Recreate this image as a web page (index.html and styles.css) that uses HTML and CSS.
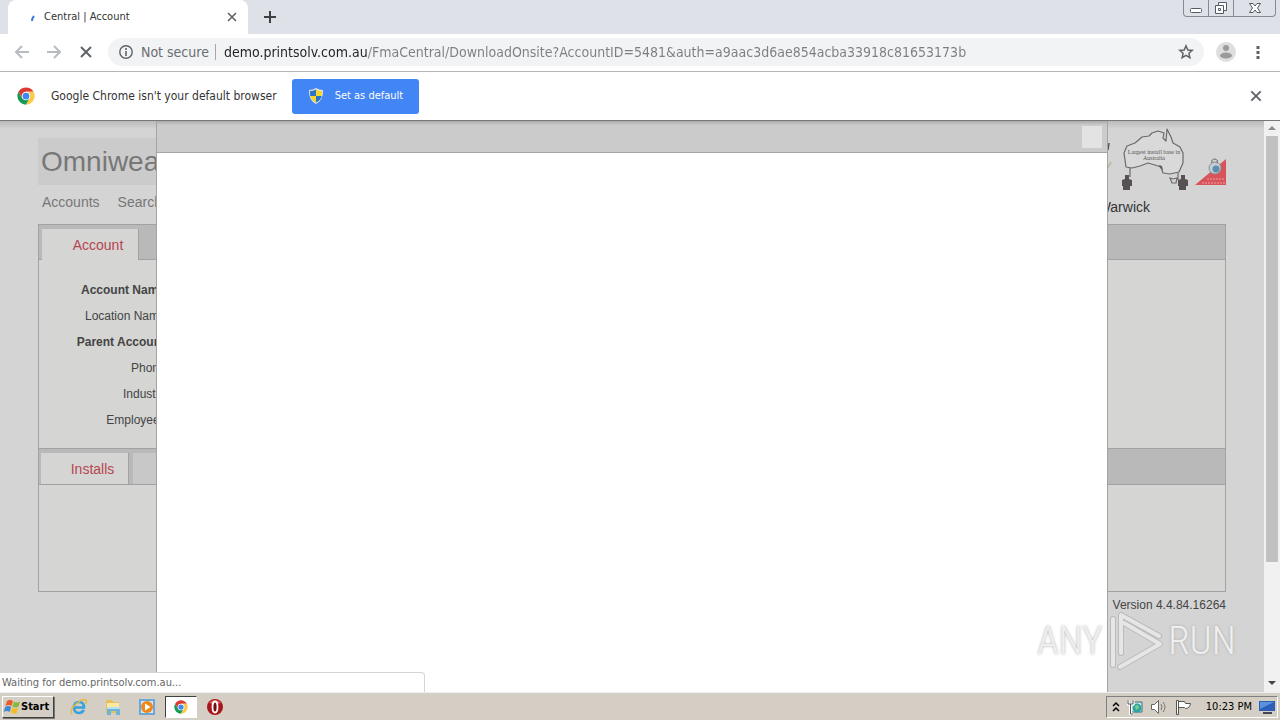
FILE: index.html
```html
<!DOCTYPE html>
<html lang="en">
<head>
<meta charset="utf-8">
<title>Central | Account</title>
<link rel="stylesheet" href="styles.css">
</head>
<body>
<svg class="defs" aria-hidden="true">
  <symbol id="chrome" viewBox="0 0 48 48">
    <circle cx="24" cy="24" r="23" fill="#fff"/>
    <path d="M24 24 4.1 12.5A23 23 0 0 1 43.9 12.5H24z" fill="#db3a30"/>
    <path d="M4.1 12.5A23 23 0 0 0 24 47L34 29.8 24 24 14 29.8z" fill="#179a58"/>
    <path d="M43.9 12.5A23 23 0 0 1 24 47L34 29.8 32 16 24 12.5z" fill="#fbcb43"/>
    <path d="M4.1 12.5 14 29.8 24 12.5z" fill="#db3a30"/>
    <circle cx="24" cy="24" r="11.5" fill="#fff"/>
    <circle cx="24" cy="24" r="9" fill="#4285f4"/>
  </symbol>
  <symbol id="cross" viewBox="0 0 12 12">
    <path d="M2 2 10 10M10 2 2 10" fill="none" stroke="currentColor" stroke-width="1.600"/>
  </symbol>
</svg>

<header class="tabstrip">
  <div class="tab">
    <svg class="spinner" viewBox="0 0 8 10"><path d="M6 2Q4 4 4 7" fill="none" stroke="#3b78d8" stroke-width="2"/></svg>
    <span class="tab-title">Central | Account</span>
    <button class="icon-btn tab-close" aria-label="Close tab"><svg width="12" height="12"><use href="#cross"/></svg></button>
  </div>
  <button class="icon-btn new-tab" aria-label="New tab"><svg width="14" height="14" viewBox="0 0 14 14"><path d="M7 1V13M1 7H13" stroke="#3c4043" stroke-width="2"/></svg></button>
  <div class="window-controls">
    <button class="wc" aria-label="Minimize"><svg width="14" height="16" viewBox="0 0 14 16"><rect x="1.500" y="8.500" width="11" height="4" rx="1" fill="#fff" stroke="#555b66"/></svg></button>
    <button class="wc" aria-label="Restore"><svg width="14" height="16" viewBox="0 0 14 16"><path d="M4.500 2.500h8v8h-8z" fill="#fff" stroke="#555b66"/><path d="M1.500 5.500h8v8h-8zM4.500 8.500h2v2h-2z" fill="#fff" stroke="#555b66"/></svg></button>
    <button class="wc wc-close" aria-label="Close"><svg width="14" height="16" viewBox="0 0 14 16"><path d="M1.500 3.500h3.500l2 2.500 2-2.500h3.500L9.500 8l3 4.500H9L7 10l-2 2.500H1.500L4.500 8z" fill="#fff" stroke="#555b66"/></svg></button>
  </div>
</header>

<nav class="toolbar">
  <button class="icon-btn tool" aria-label="Back"><svg width="16" height="16" viewBox="0 0 16 16"><path d="M15 8H2M8 2 2 8l6 6" fill="none" stroke="#b8bbbf" stroke-width="2"/></svg></button>
  <button class="icon-btn tool" aria-label="Forward"><svg width="16" height="16" viewBox="0 0 16 16"><path d="M1 8h13M8 2l6 6-6 6" fill="none" stroke="#b8bbbf" stroke-width="2"/></svg></button>
  <button class="icon-btn tool" aria-label="Stop"><svg width="16" height="16" viewBox="0 0 16 16"><path d="M3 3 13 13M13 3 3 13" stroke="#5f6368" stroke-width="2"/></svg></button>
  <div class="omnibox">
    <svg width="16" height="16" viewBox="0 0 16 16"><circle cx="8" cy="8" r="6.200" fill="none" stroke="#5f6368" stroke-width="1.400"/><path d="M8 7v5M8 4v2" stroke="#5f6368" stroke-width="1.600"/></svg>
    <label class="secure" for="url">Not secure</label>
    <input class="url" id="url" type="text" spellcheck="false" value="demo.printsolv.com.au/FmaCentral/DownloadOnsite?AccountID=5481&amp;auth=a9aac3d6ae854acba33918c81653173b">
    <button class="icon-btn star" aria-label="Bookmark this page"><svg width="16" height="16" viewBox="0 0 16 16"><path d="M8 1.800 9.800 6l4.400.4-3.300 2.900 1 4.400L8 11.400l-3.900 2.300 1-4.400L1.800 6.400 6.200 6z" fill="none" stroke="#5f6368" stroke-width="1.500"/></svg></button>
  </div>
  <button class="icon-btn profile" aria-label="Profile"><svg width="20" height="20" viewBox="0 0 20 20"><circle cx="10" cy="10" r="10" fill="#dedede"/><circle cx="10" cy="6" r="3" fill="#9a9a9a"/><ellipse cx="10" cy="13.500" rx="6" ry="3" fill="#9a9a9a"/></svg></button>
  <button class="icon-btn menu" aria-label="Menu"><svg width="4" height="14" viewBox="0 0 4 14"><path d="M.5 1h3v3h-3zM.5 6h3v3h-3zM.5 11h3v3h-3z" fill="#5f6368"/></svg></button>
</nav>

<section class="infobar">
  <svg width="18" height="18"><use href="#chrome"/></svg>
  <span class="info-text">Google Chrome isn't your default browser</span>
  <button class="set-default">
    <svg width="16" height="16" viewBox="0 0 16 16"><path d="M8 0Q11 2 15 2 15.500 12 8 16 .5 12 1 2 5 2 8 0z" fill="#dfe5e9"/><path d="M8 1.500V8H2.200L2 3Q5 3 8 1.500z" fill="#2b75c4"/><path d="M8 1.500Q11 3 14 3L13.800 8H8z" fill="#f6d531"/><path d="M2.200 8H8v6.800Q3 12 2.200 8z" fill="#f6d531"/><path d="M8 8h5.800Q13 12 8 14.800z" fill="#2b75c4"/></svg>
    <span>Set as default</span>
  </button>
  <button class="icon-btn info-close" aria-label="Dismiss"><svg width="14" height="14"><use href="#cross"/></svg></button>
</section>

<div class="viewport">
  <main class="page">
    <div class="brand">
      <h1 class="company">Omniwealth</h1>
      <svg class="brand-art" width="124" height="68" viewBox="0 0 124 68">
        <path d="M7 18 6 25" fill="none" stroke="#555" stroke-width="1.500"/><path d="M9 37 5 44" fill="none" stroke="#c0bda3" stroke-width="2"/>
        <path d="M24 42 22 28 25 21 33 18 40 12 47 11 50 8 56 6 62 8 61 13 64 16 65 4 69 12 71 18 78 22 81 28 81 38 77 47 68 49 61 48 59 42 53 40 46 38 38 41 30 43z" fill="#d9d9d9" stroke="#6a6a6a" stroke-width="1.200" stroke-linejoin="round"/>
        <path d="M57 40l3 1 1 4-3-2z" fill="#606060"/>
        <path d="M28 43v9M76 48v7M68 53l3 1 4-1-1 5h-4z" fill="none" stroke="#6a6a6a" stroke-width="1.200"/>
        <path id="person" d="M23 50h4v4l3 1v6h-2v4h-7v-4h-1v-6l3-1z" fill="#565254"/>
        <use href="#person" x="56"/>
        <text x="52" y="29" class="map-text">Largest install base in</text>
        <text x="52" y="35" class="map-text">Australia</text>
        <path d="M93 60 124 34V60z" fill="#d9535b"/>
        <path d="M105 54h18M100 58h23" stroke="#e9a2a4" stroke-width="1" stroke-dasharray="2 1"/>
        <circle cx="113" cy="43" r="6" fill="#c3ccd1" stroke="#8b9298"/><circle cx="114" cy="44" r="3.500" fill="#5b8faf"/><path d="M110 38q-1-4 3-4 4 1 2 4" fill="none" stroke="#666"/>
      </svg>
    </div>
    <div class="menu-row">
      <a class="menu-link" href="#accounts">Accounts</a>
      <a class="menu-link" href="#search">Search</a>
      <span class="user">Warwick</span>
    </div>
    <section class="panel">
      <div class="panel-tabs">
        <button class="panel-tab">Account</button>
      </div>
      <dl class="fields">
        <dt class="strong">Account Name:</dt>
        <dt>Location Name:</dt>
        <dt class="strong">Parent Account:</dt>
        <dt>Phone:</dt>
        <dt>Industry:</dt>
        <dt>Employees:</dt>
      </dl>
      <div class="panel-tabs lower">
        <button class="panel-tab installs">Installs</button>
        <span class="panel-tab-idle"></span>
      </div>
      <div class="panel-body"></div>
    </section>
    <p class="version">Version 4.4.84.16264</p>
  </main>
  <div class="modal-layer">
    <div class="modal" role="dialog" aria-label="Download">
      <div class="modal-bar"><button class="modal-close" aria-label="Close dialog"></button></div>
    </div>
  </div>
  <div class="scrollbar">
    <svg width="8" height="14" viewBox="0 0 8 14"><path d="M0 9 4 5l4 4z" fill="#8b8b8b"/></svg>
    <div class="thumb-track"><div class="thumb"></div></div>
    <svg width="8" height="18" viewBox="0 0 8 18"><path d="M0 7h8l-4 4z" fill="#444"/></svg>
  </div>
  <div class="status">Waiting for demo.printsolv.com.au...</div>
  <div class="watermark">
    <span class="mark-word">ANY</span>
    <svg width="56" height="62" viewBox="0 0 56 62">
      <g fill="none" stroke-linecap="round" stroke-linejoin="round">
        <path d="M5 55V9M13 43V5L51 26M12 57 52 34 16 13" stroke="#aaa" stroke-opacity=".6" stroke-width="6"/>
        <path d="M5 55V9M13 43V5L51 26M12 57 52 34 16 13" stroke="#e6e6e6" stroke-width="4"/>
      </g>
    </svg>
    <span class="mark-word">RUN</span>
  </div>
</div>

<footer class="taskbar">
  <button class="start">
    <svg width="18" height="16" viewBox="0 0 18 16"><path d="M4 2q3-2 6 0L8.500 7q-3-2-6 0z" fill="#ea5b28"/><path d="M11 2.500q3 2 6 0L15.500 7.500q-3 2-6 0z" fill="#86b93a"/><path d="M2.200 8q3-2 6 0L6.700 13q-3-2-6 0z" fill="#3f8bd0"/><path d="M9.200 8.500q3 2 6 0L13.700 14q-3 1.500-6-.5z" fill="#f6bd28"/></svg>
    <span>Start</span>
  </button>
  <button class="task" aria-label="Internet Explorer"><svg width="18" height="18" viewBox="0 0 18 18"><path d="M14 12Q12 15 9 15 4 15 4 9.500T9 4q5 0 5 5.500H5" fill="none" stroke="#35a3df" stroke-width="2.600"/><path d="M2 16Q-1 12 6 6 13 0 16 2q1 1 0 4" fill="none" stroke="#e6b93a" stroke-width="1.500"/></svg></button>
  <button class="task" aria-label="File Explorer"><svg width="18" height="18" viewBox="0 0 18 18"><path d="M2 2h6l1 2h6v11H2z" fill="#e5c157"/><path d="M3 5h12v7H3z" fill="#f9e9a4"/><path d="M3 9h13v8h-4v-4H7v4H3z" fill="#6db4dc"/><path d="M3 9h13v2H3z" fill="#b6e0ef"/></svg></button>
  <button class="task" aria-label="Media Player"><svg width="18" height="18" viewBox="0 0 18 18"><path d="M1 1h16v16H1z" fill="#6aa8dc"/><path d="M3 3h12v12H3z" fill="#d5e8f5"/><circle cx="9" cy="9" r="6" fill="#f08719"/><path d="M7 5.500v7L12.500 9z" fill="#fff"/></svg></button>
  <button class="task active" aria-label="Google Chrome"><svg width="14" height="14"><use href="#chrome"/></svg></button>
  <button class="task" aria-label="Opera"><svg width="18" height="18" viewBox="0 0 18 18"><circle cx="9" cy="9" r="8" fill="#a9151b"/><path d="M3 5Q9-1 15 5 9 7 3 5z" fill="#d66"/><ellipse cx="9" cy="9" rx="2.500" ry="5.500" fill="#7a0c10" stroke="#fff" stroke-width="1.800"/></svg></button>
  <div class="tray">
    <svg width="8" height="12" viewBox="0 0 8 12"><path d="M1 5l3-3 3 3M1 10l3-3 3 3" fill="none" stroke="#000" stroke-width="1.500"/></svg>
    <svg width="16" height="16" viewBox="0 0 16 16"><path d="M4 3h11v10H4z" fill="#cfe9ef" stroke="#3d6b7a"/><circle cx="10" cy="9" r="4.500" fill="#2fa5a0"/><path d="M8 7l3-1 1 3-3 2z" fill="#7bd28a"/><path d="M1 1v4h5V1M3.500 5v10H6" fill="none" stroke="#fff" stroke-width="3"/><path d="M1 1v4h5V1M3.500 5v10H6" fill="none" stroke="#555"/></svg>
    <svg width="18" height="16" viewBox="0 0 18 16"><path d="M1.500 5.500h3l4-4v13l-4-4h-3z" fill="#fff" stroke="#666"/><path d="M11 5q2 3 0 6M13 3q4 5 0 10" fill="none" stroke="#777"/></svg>
    <svg width="18" height="16" viewBox="0 0 18 16"><path d="M3.500 2.500h6l1 2h5q-1 5-5 5l-1-1h-6" fill="#fff" stroke="#555"/><path d="M1.500 1.500h2v14h-2z" fill="#fff" stroke="#555"/></svg>
    <time class="clock">10:23 PM</time>
    <svg width="16" height="14" viewBox="0 0 16 14"><path d="M0 1h16v10H0z" fill="#2c5fb5"/><path d="M1 2h14L1 9z" fill="#5b92dd"/><path d="M4 12h9v2H4z" fill="#445"/></svg>
  </div>
</footer>
</body>
</html>
```
FILE: styles.css
```css
* { box-sizing: border-box; }
body {
  margin: 0;
  height: 100vh;
  display: flex;
  flex-direction: column;
  overflow: hidden;
  background: #fff;
  font: 11px/16px "DejaVu Sans Condensed", "Noto Sans", sans-serif;
  color: #333;
}
button { font: inherit; color: inherit; border: 0; padding: 0; margin: 0; background: none; }
svg { display: block; flex: none; }
.defs { position: absolute; width: 0; height: 0; }
.icon-btn { display: flex; align-items: center; justify-content: center; flex: none; color: #5f6368; }

.tabstrip { display: flex; flex: none; height: 34px; padding-left: 8px; background: #dee1e8; }
.tab { display: flex; align-items: center; width: 240px; padding: 0 10px 0 20px; border-radius: 8px 8px 0 0; background: #fff; }
.spinner { width: 8px; height: 10px; margin-top: 4px; }
.tab-title { flex: 1; padding-left: 8px; }
.new-tab { width: 28px; margin-left: 8px; }
.window-controls { display: flex; height: 17px; margin: 0 4px 0 auto; border: 1px solid #858b96; border-top: 0; border-radius: 0 0 4px 4px; }
.wc { display: flex; align-items: center; justify-content: center; width: 25px; border-right: 1px solid #858b96; }
.wc-close { width: 41px; border-right: 0; }

.toolbar { display: flex; flex: none; align-items: center; height: 38px; padding: 0 18px 2px 6px; border-bottom: 1px solid #b4b5b7; }
.tool { width: 32px; height: 28px; }
.omnibox { display: flex; flex: 1; align-items: center; height: 28px; margin-left: 6px; padding: 0 10px; border-radius: 14px; background: #f1f3f4; font-size: 14px; }
.secure { margin-left: 7px; padding-right: 6px; border-right: 1px solid #a5a8ab; color: #6a6d71; }
.url {
  flex: 1;
  min-width: 0;
  height: 24px;
  margin-left: 8px;
  padding: 0;
  border: 0;
  outline: 0;
  font: inherit;
  background: linear-gradient(90deg, #202124 144px, #7b7e82 144px);
  -webkit-background-clip: text;
  background-clip: text;
  -webkit-text-fill-color: transparent;
}
.profile { margin-left: 12px; }
.menu { width: 16px; margin-left: 14px; margin-right: -4px; }

.infobar { display: flex; flex: none; align-items: center; height: 49px; padding: 0 17px; border-bottom: 1px solid #777; font-size: 12px; }
.info-text { margin: 0 15px 0 16px; }
.set-default { display: flex; align-items: center; gap: 11px; height: 35px; padding: 0 16px; border-radius: 3px; background: #4285f4; color: #fff; font-size: 11px; }
.info-close { margin-left: auto; }

.viewport { position: relative; display: flex; flex: 1; min-height: 0; overflow: hidden; font-family: "Liberation Sans", Arial, sans-serif; }
.page { flex: 1; min-width: 0; padding: 4px 38px 0; background: linear-gradient(#bbb, #d4d4d4 8px); }
.brand { display: flex; align-items: flex-end; height: 60px; }
.company { flex: 1; height: 47px; margin: 0; padding-left: 3px; background: linear-gradient(90deg, #cbcbcb 80%, #d4d4d4 80%); color: #777; font-size: 28px; font-weight: 400; line-height: 47px; }
.brand-art { align-self: flex-start; }
.map-text { font: 6px "Liberation Serif", serif; text-anchor: middle; fill: #555; }
.menu-row { display: flex; align-items: center; gap: 18px; height: 39px; padding: 0 76px 6px 4px; font-size: 14px; }
.menu-link { color: #777; text-decoration: none; }
.user { margin: 10px 0 0 auto; color: #333; }
.panel { border: 1px solid #a2a2a2; background: #d5d5d4; }
.panel-tabs { display: flex; height: 35px; padding: 4px 0 0 3px; background: #b9b9b9; border-bottom: 1px solid #a2a2a2; }
.panel-tab { width: 97px; height: 31px; padding-left: 16px; border-right: 1px solid #a2a2a2; background: #d5d5d4; color: #b64550; font-size: 14px; }
.installs { width: 88px; }
.fields { margin: 0; padding: 17px 0 15px; font-size: 12px; line-height: 26px; }
.fields dt { width: 130px; text-align: right; white-space: nowrap; color: #444; }
.fields .strong { font-weight: 700; }
.lower { height: 37px; padding-left: 2px; border-top: 1px solid #a2a2a2; }
.panel-tab-idle { width: 97px; height: 31px; margin-left: 4px; background: #c8c8c8; }
.panel-body { height: 106px; }
.version { margin: 5px 0 0; text-align: right; font-size: 12px; color: #444; }

.modal-layer { position: absolute; inset: 0 16px 0 0; display: flex; justify-content: center; }
.modal { width: 952px; background: #fff; border: 1px solid #a4a4a4; border-width: 0 1px; }
.modal-bar { display: flex; align-items: center; justify-content: flex-end; height: 32px; padding-right: 5px; border-bottom: 1px solid #a4a4a4; background: linear-gradient(#aaa, #cbcbcb 4px); }
.modal-close { width: 20px; height: 22px; background: #e3e3e3; }

.scrollbar { display: flex; flex: none; flex-direction: column; align-items: center; width: 16px; background: #f1f1f1; }
.thumb-track { flex: 1; width: 12px; }
.thumb { height: 79%; margin-top: 1px; background: #c1c1c1; }
.status { position: absolute; left: 0; bottom: 0; width: 425px; height: 20px; padding-left: 2px; border: 1px solid #d5d5d5; border-width: 1px 1px 0 0; border-radius: 0 4px 0 0; background: #fff; color: #666; font: 11px/20px "DejaVu Sans Condensed", sans-serif; }
.watermark { position: absolute; right: 46px; bottom: 20px; display: flex; align-items: center; gap: 6px; font: 300 39px/62px "Roboto Condensed", "Liberation Sans Narrow", "Liberation Sans", sans-serif; color: #efefef; text-shadow: 0 0 3px #aaa; }
.mark-word { display: flex; justify-content: center; width: 64px; }

.taskbar { display: flex; flex: none; align-items: center; height: 28px; padding: 1px 2px; border-top: 1px solid #eee; background: #d5cec5; color: #000; }
.start { display: flex; align-items: center; width: 52px; height: 22px; margin-right: 9px; border: 1px solid #fff; border-right-color: #404040; border-bottom-color: #404040; box-shadow: 1px 1px 0 #777; font-size: 11px; font-weight: 700; }
.task { display: flex; align-items: center; justify-content: center; width: 32px; height: 22px; margin-right: 2px; }
.active { border: 1px solid #fff; border-top-color: #404040; border-left-color: #404040; background: #fff; }
.tray { display: flex; align-items: center; gap: 7px; height: 22px; margin-left: auto; padding: 0 2px 0 5px; border: 1px solid #fff; border-top-color: #808080; border-left-color: #808080; }
.tray .clock { margin: 0 0 0 6px; }
```
